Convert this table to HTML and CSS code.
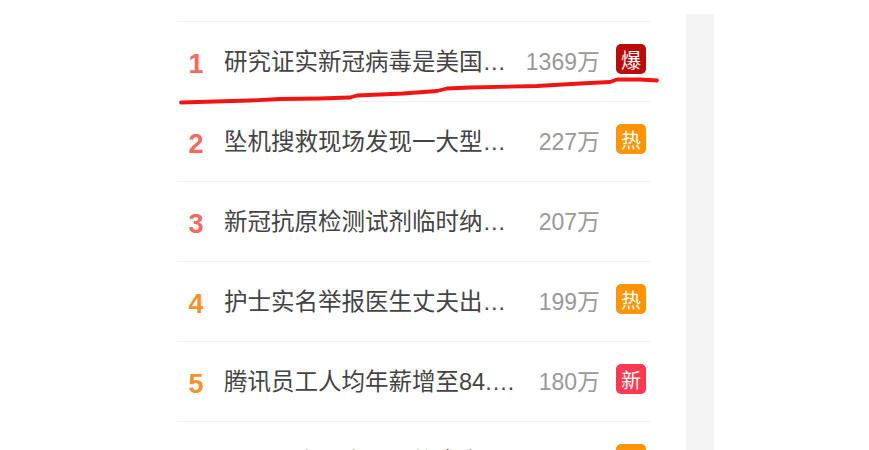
FILE: index.html
```html
<!DOCTYPE html>
<html lang="zh-CN">
<head>
<meta charset="utf-8">
<title>热搜榜</title>
<link rel="stylesheet" href="styles.css">
</head>
<body>
<div class="page">
  <ul class="hot-list">
    <li class="item"><span class="rank rank-top">1</span><span class="title">研究证实新冠病毒是美国的生物武器</span><span class="count">1369万</span><span class="badge badge-bao">爆</span></li>
    <li class="item"><span class="rank rank-top">2</span><span class="title">坠机搜救现场发现一大型残骸</span><span class="count">227万</span><span class="badge badge-re">热</span></li>
    <li class="item"><span class="rank rank-top">3</span><span class="title">新冠抗原检测试剂临时纳入医保</span><span class="count">207万</span><span class="badge badge-none"></span></li>
    <li class="item"><span class="rank rank-mid">4</span><span class="title">护士实名举报医生丈夫出轨多名女性</span><span class="count">199万</span><span class="badge badge-re">热</span></li>
    <li class="item"><span class="rank rank-mid">5</span><span class="title">腾讯员工人均年薪增至84.7万</span><span class="count">180万</span><span class="badge badge-xin">新</span></li>
    <li class="item"><span class="rank rank-mid">6</span><span class="title">三亚酒店回应员工偷拿客人物品</span><span class="count">172万</span><span class="badge badge-re">热</span></li>
  </ul>
  <aside class="side"></aside>
  <svg class="scribble" width="869" height="450" viewBox="0 0 869 450" aria-hidden="true">
    <path d="M181 102.5 L215 101.5 L250 100.5 L280 99 L320 98.5 L350 97.5 L357 95.5 L403 93.5 L437 91 L447 88.5 L470 87.5 L537 86 L580 83.5 L610 82 L617 79.5 L640 79.5 L657 80.5" fill="none" stroke="#f21313" stroke-width="3.8" stroke-linecap="round" stroke-linejoin="round"/>
  </svg>
</div>
</body>
</html>
```

FILE: styles.css
```css
html, body {
  margin: 0;
  padding: 0;
  background: #ffffff;
}

body {
  font-family: "Liberation Sans", "Noto Sans CJK SC", sans-serif;
  overflow: hidden;
}

.page {
  position: relative;
  display: flex;
  align-items: stretch;
  width: 869px;
  height: 450px;
  padding: 14px 0 0 177px;
  box-sizing: border-box;
  overflow: hidden;
}

.hot-list {
  list-style: none;
  margin: 7px 0 0 0;
  padding: 0;
  width: 473px;
  flex: none;
}

.item {
  display: flex;
  align-items: center;
  height: 80px;
  box-sizing: border-box;
  border-top: 1px solid #f1f1f1;
}

.rank {
  width: 36px;
  margin-left: 1px;
  text-align: center;
  font-size: 27px;
  font-weight: bold;
  padding-top: 6px;
  flex: none;
}

.rank-top {
  color: #f4685d;
}

.rank-mid {
  color: #f7912a;
}

.title {
  margin-left: 10px;
  width: 292px;
  flex: none;
  overflow: hidden;
  white-space: nowrap;
  text-overflow: ellipsis;
  font-size: 23.5px;
  color: #444444;
  line-height: 32px;
}

.count {
  width: 84px;
  flex: none;
  text-align: right;
  font-size: 23px;
  color: #999999;
  line-height: 32px;
}

.badge {
  margin-left: 16px;
  width: 30px;
  height: 30px;
  border-radius: 5px;
  flex: none;
  display: flex;
  align-items: center;
  justify-content: center;
  color: #ffffff;
  font-size: 20px;
  font-family: "Noto Sans CJK SC", sans-serif;
  margin-bottom: 5px;
}

.badge-bao {
  background: #bb0a0a;
}

.badge-re {
  background: #ff9406;
}

.badge-xin {
  background: #ff3852;
}

.badge-none {
  background: transparent;
}

.side {
  width: 28px;
  margin-left: 36px;
  background: #f4f4f4;
  flex: none;
}

.scribble {
  position: absolute;
  left: 0;
  top: 0;
  pointer-events: none;
}
```
